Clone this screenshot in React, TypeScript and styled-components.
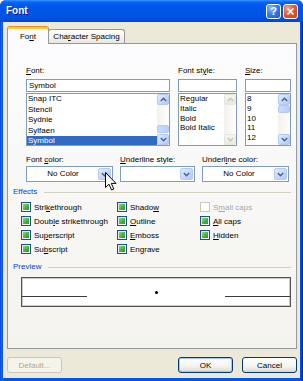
import React from "react";
import styled, { createGlobalStyle } from "styled-components";

const Global = createGlobalStyle`
  html, body { margin: 0; padding: 0; background: #ffffff; }
  body { font-family: "Liberation Sans", Arial, sans-serif; font-size: 8px; color: #000; }
  #root { width: 303px; height: 381px; }
  u { text-decoration: underline; text-underline-offset: 1px; }
`;

const Window = styled.div`
  width: 303px;
  height: 381px;
  display: flex;
  flex-direction: column;
  background: linear-gradient(to right, #0831d9 0px, #166aee 1px, #0055ea 3px, #0055ea 299px, #0d4cd6 301px, #001ea0 303px);
  border-radius: 6px 6px 0 0;
  overflow: hidden;
`;

const TitleBar = styled.div`
  height: 22px;
  flex: none;
  display: flex;
  align-items: center;
  padding: 0 5px 0 6px;
  background: linear-gradient(to bottom, #3d95ff 0px, #0a66f6 2px, #0058ee 5px, #0055e5 11px, #0054e3 17px, #0046d5 22px);
`;

const Title = styled.div`
  flex: 1;
  color: #ffffff;
  font-weight: bold;
  font-size: 10px;
  line-height: 12px;
  text-shadow: 1px 1px 0 #0a1883;
`;

const CaptionButtons = styled.div`
  display: flex;
  gap: 2px;
`;

const CaptionButton = styled.div<{ $close?: boolean }>`
  width: 15px;
  height: 15px;
  box-sizing: border-box;
  border: 1px solid #ffffff;
  border-radius: 3px;
  display: flex;
  align-items: center;
  justify-content: center;
  background: ${(p) =>
    p.$close
      ? "radial-gradient(circle at 30% 25%, #f3a58c 0%, #e35c34 45%, #c83e16 100%)"
      : "radial-gradient(circle at 30% 25%, #8fb8fb 0%, #3b7cf0 45%, #1a56d6 100%)"};
  color: #ffffff;
  font-weight: bold;
  font-size: 11px;
  line-height: 11px;
`;

const Frame = styled.div`
  flex: 1;
  display: flex;
  padding: 0 4px 3px 3px;
  min-height: 0;
`;

const Client = styled.div`
  flex: 1;
  background: #ece9d8;
  display: flex;
  flex-direction: column;
  padding: 5px 3px 5px 4px;
`;

const TabStrip = styled.div`
  height: 17px;
  flex: none;
  display: flex;
  align-items: flex-end;
  margin-bottom: -1px;
  position: relative;
  z-index: 1;
`;

const Tab = styled.div<{ $active?: boolean }>`
  box-sizing: border-box;
  display: flex;
  align-items: center;
  justify-content: center;
  border: 1px solid #919b9c;
  border-radius: 3px 3px 0 0;
  ${(p) =>
    p.$active
      ? `
    width: 42px;
    height: 17px;
    border-bottom: none;
    border-top: 2px solid #ffc83c;
    box-shadow: inset 0 0 0 0 transparent, 0 -1px 0 #e68b2c;
    background: #fcfcfe;
    position: relative;
    z-index: 2;
    padding-bottom: 1px;
  `
      : `
    width: 77px;
    height: 14px;
    margin-left: -1px;
    margin-bottom: 1px;
    border-bottom: none;
    background: linear-gradient(to bottom, #ffffff, #f1f0ea 70%, #e7e5dc);
  `}
`;

const Panel = styled.div`
  flex: 1;
  border: 1px solid #919b9c;
  background: linear-gradient(to bottom, #fcfcfe, #f4f3ee);
  padding: 22px 5px 0 5px;
  display: flex;
  flex-direction: column;
`;

const Indented = styled.div<{ $left: number }>`
  margin-left: ${(p) => p.$left}px;
`;

const Row = styled.div<{ $gap: number; $top?: number }>`
  display: flex;
  gap: ${(p) => p.$gap}px;
  margin-top: ${(p) => p.$top ?? 0}px;
`;

const Field = styled.div<{ $w: number }>`
  width: ${(p) => p.$w}px;
  display: flex;
  flex-direction: column;
  position: relative;
`;

const Label = styled.div`
  height: 10px;
  line-height: 10px;
  margin-bottom: 3px;
  white-space: nowrap;
`;

const LabelTight = styled(Label)`
  margin-bottom: 1px;
`;

const TextInput = styled.div`
  height: 13px;
  box-sizing: border-box;
  border: 1px solid #7f9db9;
  background: #ffffff;
  padding: 0 2px;
  line-height: 11px;
`;

const ListBox = styled.div`
  height: 53px;
  margin-top: 1px;
  box-sizing: border-box;
  border: 1px solid #7f9db9;
  background: #ffffff;
  display: flex;
  overflow: hidden;
`;

const Items = styled.div`
  flex: 1;
  display: flex;
  flex-direction: column;
  overflow: hidden;
`;

const Item = styled.div<{ $h: number; $sel?: boolean }>`
  height: ${(p) => p.$h}px;
  line-height: ${(p) => p.$h}px;
  flex: none;
  padding-left: 1px;
  white-space: nowrap;
  background: ${(p) => (p.$sel ? "#316ac5" : "transparent")};
  color: ${(p) => (p.$sel ? "#ffffff" : "#000000")};
`;

const ScrollBar = styled.div`
  width: 12px;
  flex: none;
  display: flex;
  flex-direction: column;
  background: linear-gradient(to right, #f3f1ec, #fefefb);
`;

const ScrollBtn = styled.div<{ $disabled?: boolean }>`
  height: 11px;
  flex: none;
  box-sizing: border-box;
  border: 1px solid ${(p) => (p.$disabled ? "#e8e6da" : "#b4c8f6")};
  border-radius: 2px;
  background: ${(p) =>
    p.$disabled
      ? "linear-gradient(to bottom, #f7f6f1, #ebe9df)"
      : "linear-gradient(to bottom right, #e3ecfe, #c3d6fd 60%, #b1c9f8)"};
  display: flex;
  align-items: center;
  justify-content: center;
`;

const Track = styled.div`
  flex: 1;
  display: flex;
  flex-direction: column;
`;

const Thumb = styled.div<{ $offset: number }>`
  margin-top: ${(p) => p.$offset}px;
  height: 8px;
  box-sizing: border-box;
  border: 1px solid #b4c8f6;
  border-radius: 2px;
  background: linear-gradient(to right, #c9dafd, #b9cffb);
`;

const Combo = styled.div<{ $w: number }>`
  width: ${(p) => p.$w}px;
  height: 16px;
  box-sizing: border-box;
  border: 1px solid #7f9db9;
  background: #ffffff;
  display: flex;
  padding: 1px;
`;

const ComboText = styled.div`
  flex: 1;
  text-align: center;
  line-height: 12px;
`;

const ComboBtn = styled.div`
  width: 13px;
  box-sizing: border-box;
  border: 1px solid #b4c8f6;
  border-radius: 2px;
  background: linear-gradient(to bottom right, #e3ecfe, #c3d6fd 60%, #b1c9f8);
  display: flex;
  align-items: center;
  justify-content: center;
`;

const Cursor = styled.svg`
  position: absolute;
  left: 79px;
  top: 17px;
  z-index: 5;
`;

const GroupHeader = styled.div<{ $top: number }>`
  display: flex;
  align-items: center;
  height: 10px;
  margin-top: ${(p) => p.$top}px;
`;

const GroupTitle = styled.div`
  color: #0046d5;
  line-height: 10px;
`;

const GroupLine = styled.div`
  flex: 1;
  height: 1px;
  margin-left: 7px;
  background: #d0d0bf;
`;

const CheckGrid = styled.div`
  margin: 3px 0 0 8px;
  display: grid;
  grid-template-columns: 96px 83px 1fr;
  grid-auto-rows: 14px;
`;

const Check = styled.div<{ $disabled?: boolean }>`
  display: flex;
  align-items: center;
  gap: 3px;
  white-space: nowrap;
  color: ${(p) => (p.$disabled ? "#aca899" : "#000")};
`;

const Box = styled.div<{ $disabled?: boolean }>`
  width: 10px;
  height: 10px;
  box-sizing: border-box;
  border: 1px solid ${(p) => (p.$disabled ? "#cac8bb" : "#1c5180")};
  background: ${(p) => (p.$disabled ? "#ffffff" : "linear-gradient(to bottom right, #dcdcd7, #ffffff)")};
  display: flex;
  align-items: center;
  justify-content: center;
`;

const Mixed = styled.div`
  width: 6px;
  height: 6px;
  background: linear-gradient(to bottom right, #8fd68f, #3fae3f 60%, #2f9a2f);
`;

const PreviewBox = styled.div`
  margin: 5px 0 0 8px;
  height: 30px;
  box-sizing: border-box;
  border: 1px solid #555555;
  box-shadow: inset 0 0 0 1px #c8c8c8;
  background: #ffffff;
  display: flex;
  align-items: flex-start;
`;

const Segment = styled.div`
  width: 65px;
  height: 1px;
  margin-top: 18px;
  background: #3c3c3c;
`;

const PreviewCenter = styled.div`
  flex: 1;
  display: flex;
  justify-content: center;
`;

const Dot = styled.div`
  width: 3px;
  height: 3px;
  margin-top: 13px;
  border-radius: 50%;
  background: #000;
`;

const ButtonRow = styled.div`
  margin-top: 8px;
  height: 16px;
  flex: none;
  display: flex;
  gap: 9px;
`;

const Spacer = styled.div`
  flex: 1;
`;

const Button = styled.div<{ $disabled?: boolean; $default?: boolean }>`
  width: 55px;
  height: 16px;
  box-sizing: border-box;
  border-radius: 3px;
  display: flex;
  align-items: center;
  justify-content: center;
  border: 1px solid ${(p) => (p.$disabled ? "#c9c7ba" : "#003c74")};
  color: ${(p) => (p.$disabled ? "#aca899" : "#000")};
  background: ${(p) =>
    p.$disabled ? "#f5f4ea" : "linear-gradient(to bottom, #ffffff, #f3f3ef 60%, #e2e0d6 90%, #d6d0c5)"};
  box-shadow: ${(p) => (p.$default ? "inset 0 0 0 1px #a9c3f2" : "none")};
`;

const Arrow: React.FC<{ up?: boolean; color?: string }> = ({ up, color = "#4d6185" }) => (
  <svg width="7" height="5" viewBox="0 0 7 5">
    <path
      d={up ? "M0.8 4 L3.5 1.3 L6.2 4" : "M0.8 1 L3.5 3.7 L6.2 1"}
      fill="none"
      stroke={color}
      strokeWidth="1.5"
    />
  </svg>
);

const VScroll: React.FC<{ thumb?: number; disabled?: boolean }> = ({ thumb, disabled }) => (
  <ScrollBar>
    <ScrollBtn $disabled={disabled}>
      <Arrow up color={disabled ? "#c9c7ba" : "#4d6185"} />
    </ScrollBtn>
    <Track>{thumb !== undefined && <Thumb $offset={thumb} />}</Track>
    <ScrollBtn $disabled={disabled}>
      <Arrow color={disabled ? "#c9c7ba" : "#4d6185"} />
    </ScrollBtn>
  </ScrollBar>
);

const fonts = ["Snap ITC", "Stencil", "Sydnie", "Sylfaen", "Symbol"];
const styles = ["Regular", "Italic", "Bold", "Bold Italic"];
const sizes = ["8", "9", "10", "11", "12"];

type Eff = { pre: string; key: string; post: string; disabled?: boolean };
const effects: Eff[] = [
  { pre: "Stri", key: "k", post: "ethrough" },
  { pre: "Shado", key: "w", post: "" },
  { pre: "S", key: "m", post: "all caps", disabled: true },
  { pre: "Doub", key: "l", post: "e strikethrough" },
  { pre: "", key: "O", post: "utline" },
  { pre: "", key: "A", post: "ll caps" },
  { pre: "Su", key: "p", post: "erscript" },
  { pre: "", key: "E", post: "mboss" },
  { pre: "", key: "H", post: "idden" },
  { pre: "Su", key: "b", post: "script" },
  { pre: "En", key: "g", post: "rave" },
];

export default function App() {
  return (
    <>
      <Global />
      <Window>
        <TitleBar>
          <Title>Font</Title>
          <CaptionButtons>
            <CaptionButton>?</CaptionButton>
            <CaptionButton $close>
              <svg width="9" height="9" viewBox="0 0 9 9">
                <path d="M1.5 1.5 L7.5 7.5 M7.5 1.5 L1.5 7.5" stroke="#fff" strokeWidth="1.6" />
              </svg>
            </CaptionButton>
          </CaptionButtons>
        </TitleBar>
        <Frame>
          <Client>
            <TabStrip>
              <Tab $active>
                Fo<u>n</u>t
              </Tab>
              <Tab>
                Cha<u>r</u>acter Spacing
              </Tab>
            </TabStrip>
            <Panel>
              <Indented $left={13}>
                <Row $gap={8}>
                  <Field $w={144}>
                    <Label>
                      <u>F</u>ont:
                    </Label>
                    <TextInput>Symbol</TextInput>
                    <ListBox>
                      <Items>
                        {fonts.map((f) => (
                          <Item key={f} $h={10.5} $sel={f === "Symbol"}>
                            {f}
                          </Item>
                        ))}
                      </Items>
                      <VScroll thumb={20} />
                    </ListBox>
                  </Field>
                  <Field $w={59}>
                    <Label>
                      Font st<u>y</u>le:
                    </Label>
                    <TextInput />
                    <ListBox>
                      <Items>
                        {styles.map((s) => (
                          <Item key={s} $h={9.8}>
                            {s}
                          </Item>
                        ))}
                      </Items>
                      <VScroll disabled />
                    </ListBox>
                  </Field>
                  <Field $w={46}>
                    <Label>
                      <u>S</u>ize:
                    </Label>
                    <TextInput />
                    <ListBox>
                      <Items>
                        {sizes.map((s) => (
                          <Item key={s} $h={9.8}>
                            {s}
                          </Item>
                        ))}
                      </Items>
                      <VScroll thumb={0} />
                    </ListBox>
                  </Field>
                </Row>
                <Row $gap={7} $top={9}>
                  <Field $w={87}>
                    <LabelTight>
                      Font <u>c</u>olor:
                    </LabelTight>
                    <Combo $w={87}>
                      <ComboText>No Color</ComboText>
                      <ComboBtn>
                        <Arrow />
                      </ComboBtn>
                    </Combo>
                    <Cursor width="12" height="19" viewBox="0 0 12 19">
                      <path
                        d="M0.5 0.5 L0.5 15.5 L4 12.2 L6.6 18 L8.8 17 L6.3 11.4 L11 11.4 Z"
                        fill="#ffffff"
                        stroke="#000000"
                        strokeWidth="1"
                        strokeLinejoin="miter"
                      />
                    </Cursor>
                  </Field>
                  <Field $w={75}>
                    <LabelTight>
                      <u>U</u>nderline style:
                    </LabelTight>
                    <Combo $w={75}>
                      <ComboText />
                      <ComboBtn>
                        <Arrow />
                      </ComboBtn>
                    </Combo>
                  </Field>
                  <Field $w={87}>
                    <LabelTight>
                      Underl<u>i</u>ne color:
                    </LabelTight>
                    <Combo $w={87}>
                      <ComboText>No Color</ComboText>
                      <ComboBtn>
                        <Arrow />
                      </ComboBtn>
                    </Combo>
                  </Field>
                </Row>
              </Indented>
              <GroupHeader $top={5}>
                <GroupTitle>Effects</GroupTitle>
                <GroupLine />
              </GroupHeader>
              <CheckGrid>
                {effects.map((e) => (
                  <Check key={e.pre + e.key + e.post} $disabled={e.disabled}>
                    <Box $disabled={e.disabled}>{!e.disabled && <Mixed />}</Box>
                    <span>
                      {e.pre}
                      <u>{e.key}</u>
                      {e.post}
                    </span>
                  </Check>
                ))}
              </CheckGrid>
              <GroupHeader $top={6}>
                <GroupTitle>Preview</GroupTitle>
                <GroupLine />
              </GroupHeader>
              <PreviewBox>
                <Segment />
                <PreviewCenter>
                  <Dot />
                </PreviewCenter>
                <Segment />
              </PreviewBox>
            </Panel>
            <ButtonRow>
              <Button $disabled>Default...</Button>
              <Spacer />
              <Button $default>OK</Button>
              <Button>Cancel</Button>
            </ButtonRow>
          </Client>
        </Frame>
      </Window>
    </>
  );
}
